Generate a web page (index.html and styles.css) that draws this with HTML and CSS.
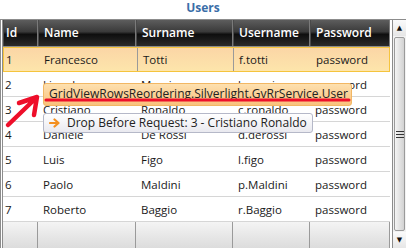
FILE: index.html
```html
<!DOCTYPE html>
<html lang="en">
<head>
  <meta charset="UTF-8">
  <title>Users</title>
  <link rel="stylesheet" href="styles.css">
</head>
<body>

  <div class="title">Users</div>

  <div class="grid-wrap">
    <div class="grid">
      <div class="row header">
        <div class="cell">Id</div>
        <div class="cell">Name</div>
        <div class="cell">Surname</div>
        <div class="cell">Username</div>
        <div class="cell">Password</div>
      </div>
      <div class="row selected">
        <div class="cell">1</div>
        <div class="cell">Francesco</div>
        <div class="cell current">Totti</div>
        <div class="cell">f.totti</div>
        <div class="cell">password</div>
      </div>
      <div class="row">
        <div class="cell">2</div>
        <div class="cell">Lionel</div>
        <div class="cell">Messi</div>
        <div class="cell">l.messi</div>
        <div class="cell">password</div>
      </div>
      <div class="row">
        <div class="cell">3</div>
        <div class="cell">Cristiano</div>
        <div class="cell">Ronaldo</div>
        <div class="cell">c.ronaldo</div>
        <div class="cell">password</div>
      </div>
      <div class="row">
        <div class="cell">4</div>
        <div class="cell">Daniele</div>
        <div class="cell">De Rossi</div>
        <div class="cell">d.derossi</div>
        <div class="cell">password</div>
      </div>
      <div class="row">
        <div class="cell">5</div>
        <div class="cell">Luis</div>
        <div class="cell">Figo</div>
        <div class="cell">l.figo</div>
        <div class="cell">password</div>
      </div>
      <div class="row">
        <div class="cell">6</div>
        <div class="cell">Paolo</div>
        <div class="cell">Maldini</div>
        <div class="cell">p.Maldini</div>
        <div class="cell">password</div>
      </div>
      <div class="row">
        <div class="cell">7</div>
        <div class="cell">Roberto</div>
        <div class="cell">Baggio</div>
        <div class="cell">r.Baggio</div>
        <div class="cell">password</div>
      </div>
      <div class="row footer">
        <div class="cell"></div>
        <div class="cell"></div>
        <div class="cell"></div>
        <div class="cell"></div>
        <div class="cell"></div>
      </div>
    </div>

    <div class="scrollbar">
      <div class="scroll-btn">&#9650;</div>
      <div class="scroll-thumb"><span class="grip"></span></div>
      <div class="scroll-btn">&#9660;</div>
    </div>

    <!-- drag visual over the grid -->
    <div class="drag-cue">GridViewRowsReordering.Silverlight.GvRrService.User</div>
    <div class="drop-cue">
      <svg class="drop-arrow" width="11" height="10" viewBox="0 0 11 10">
        <path d="M1 5 H9 M5.5 1.5 L9.5 5 L5.5 8.5" fill="none" stroke="#f39020" stroke-width="2.2" stroke-linecap="round" stroke-linejoin="round"/>
      </svg>Drop Before Request: 3 - Cristiano Ronaldo
    </div>
    <svg class="marks" width="406" height="229" viewBox="0 20 406 229">
      <line x1="46" y1="101" x2="349" y2="101" stroke="#ee0f2a" stroke-width="3" stroke-linecap="round"/>
      <path d="M8 126 L36 99 M19 104 L37 98 L34 116" fill="none" stroke="#ee0f2a" stroke-width="4.5" stroke-linecap="round" stroke-linejoin="round"/>
    </svg>
  </div>

</body>
</html>
```

FILE: styles.css
```css
body {
  margin: 0;
  font-family: "Open Sans", "DejaVu Sans", sans-serif;
  font-size: 11.5px;
  color: #1a1a1a;
  background: #ffffff;
  width: 406px;
  height: 248px;
  overflow: hidden;
}
.title {
  height: 19px;
  padding-top: 1px;
  box-sizing: border-box;
  line-height: 14px;
  text-align: center;
  font-weight: bold;
  font-size: 12px;
  color: #3a6ea8;
}
.grid-wrap {
  position: relative;
  display: flex;
  height: 228px;
  border-top: 1px solid #8c8c8c;
  border-bottom: 1px solid #8c8c8c;
}
.grid {
  width: 387px;
  border-left: 3px double #8c8c8c;
  display: flex;
  flex-direction: column;
}
.row {
  display: grid;
  grid-template-columns: 35px 98px 97px 77px 80px;
  height: 24px;
  border-bottom: 1px solid #d6d6d6;
}
.cell {
  padding-left: 5px;
  line-height: 25px;
  white-space: nowrap;
  overflow: hidden;
}
.row .cell:first-child {
  padding-left: 2px;
}
.header {
  height: 26px;
  border-bottom: 1px solid #8c8c8c;
  background: linear-gradient(#5d5d5d, #3a3a3a 45%, #0e0e0e 55%, #2a2a2a);
  color: #ffffff;
  font-weight: 600;
  font-size: 12px;
}
.header .cell {
  line-height: 26px;
  border-right: 1px solid #7a7a7a;
  border-left: 1px solid #4a4a4a;
}
.selected {
  background: linear-gradient(#fbd6a6, #fde5ab);
  border: 1px solid #f5c43d;
  height: 23px;
}
.selected .cell {
  line-height: 23px;
}
.selected .current {
  border: 1px solid #9a9a9a;
  border-top: none;
  border-bottom: none;
  background: linear-gradient(#fbd6a6, #fde5ab);
}
.footer {
  flex: 1;
  height: auto;
  border-bottom: none;
  background: linear-gradient(#f4f4f4, #dcdcdc);
}
.footer .cell {
  border-right: 1px solid #9a9a9a;
}
.scrollbar {
  width: 16px;
  margin-left: 2px;
  border-left: 1px solid #8c8c8c;
  display: flex;
  flex-direction: column;
  background: #f2f2f2;
}
.scroll-btn {
  height: 16px;
  font-size: 7px;
  line-height: 16px;
  text-align: center;
  color: #111111;
  background: linear-gradient(#fbfbfb, #e6e6e6);
}
.scroll-thumb {
  flex: 1;
  margin: 1px 1px;
  border: 1px solid #9a9a9a;
  border-radius: 2px;
  background: linear-gradient(90deg, #f4f4f4, #d2d2d2);
  display: flex;
  align-items: center;
  justify-content: center;
}
.grip {
  width: 8px;
  height: 5px;
  border-top: 1px solid #333333;
  border-bottom: 1px solid #333333;
  position: relative;
}
.grip::after {
  content: "";
  position: absolute;
  left: 0;
  right: 0;
  top: 2px;
  border-top: 1px solid #333333;
}
.drag-cue {
  position: absolute;
  left: 43px;
  top: 63px;
  width: 302px;
  height: 21px;
  padding-left: 5px;
  line-height: 19px;
  font-size: 12px;
  color: #222222;
  border: 1px solid #f2b764;
  border-radius: 3px;
  background: linear-gradient(#fde0b0, #f9c27c);
  white-space: nowrap;
}
.drop-cue {
  position: absolute;
  left: 43px;
  top: 93px;
  width: 263px;
  height: 18px;
  padding-left: 5px;
  line-height: 18px;
  font-size: 12px;
  color: #222222;
  border: 1px solid #b5b8c8;
  border-radius: 3px;
  background: linear-gradient(#ffffff, #e9e9ef);
  white-space: nowrap;
}
.drop-arrow {
  vertical-align: -1px;
  margin-right: 7px;
}
.marks {
  position: absolute;
  left: 0;
  top: -1px;
  pointer-events: none;
}
```
